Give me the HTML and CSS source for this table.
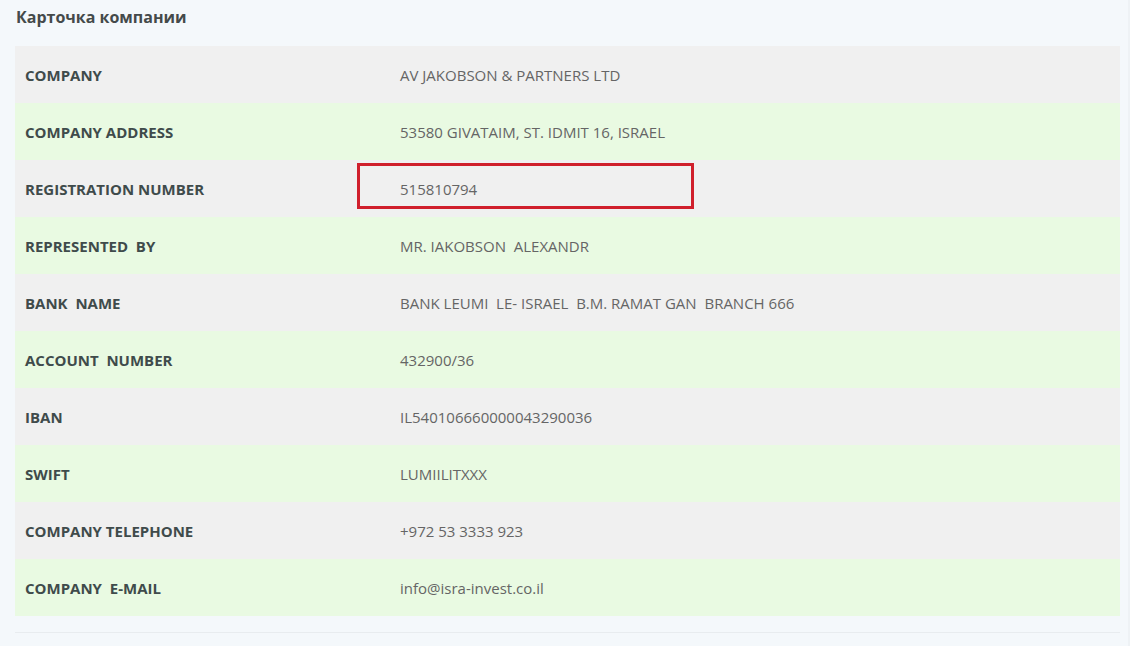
FILE: index.html
```html
<!DOCTYPE html>
<html lang="ru">
<head>
<meta charset="utf-8">
<title>Карточка компании</title>
<link rel="stylesheet" href="styles.css">
</head>
<body>
<div class="page">
  <h2 class="title">Карточка компании</h2>
  <div class="card">
    <div class="row gray"><div class="label">COMPANY</div><div class="value">AV JAKOBSON &amp; PARTNERS LTD</div></div>
    <div class="row green"><div class="label">COMPANY ADDRESS</div><div class="value">53580 GIVATAIM, ST. IDMIT 16, ISRAEL</div></div>
    <div class="row gray"><div class="label">REGISTRATION NUMBER</div><div class="value">515810794</div><div class="mark"></div></div>
    <div class="row green"><div class="label">REPRESENTED&nbsp; BY</div><div class="value">MR. IAKOBSON&nbsp; ALEXANDR</div></div>
    <div class="row gray"><div class="label">BANK&nbsp; NAME</div><div class="value">BANK LEUMI&nbsp; LE- ISRAEL&nbsp; B.M. RAMAT GAN&nbsp; BRANCH 666</div></div>
    <div class="row green"><div class="label">ACCOUNT&nbsp; NUMBER</div><div class="value">432900/36</div></div>
    <div class="row gray"><div class="label">IBAN</div><div class="value">IL540106660000043290036</div></div>
    <div class="row green"><div class="label">SWIFT</div><div class="value">LUMIILITXXX</div></div>
    <div class="row gray"><div class="label">COMPANY TELEPHONE</div><div class="value">+972 53 3333 923</div></div>
    <div class="row green"><div class="label">COMPANY&nbsp; E-MAIL</div><div class="value">info@isra-invest.co.il</div></div>
  </div>
  <div class="rule"></div>
</div>
</body>
</html>
```
FILE: styles.css
```css
html, body {
  margin: 0;
  padding: 0;
  background: #f4f8fb;
  font-family: "Open Sans", "Liberation Sans", sans-serif;
}
.page {
  width: 1130px;
  height: 646px;
  overflow: hidden;
  box-sizing: border-box;
  padding: 0 8px 0 15px;
  border-right: 2px solid #eef2f5;
}
.title {
  margin: 0;
  padding: 6px 0 0 1px;
  height: 46px;
  box-sizing: border-box;
  font-size: 16px;
  font-weight: 700;
  color: #444a4a;
}
.card {
  display: flex;
  flex-direction: column;
}
.row {
  position: relative;
  display: grid;
  grid-template-columns: 385px 1fr;
  height: 57px;
  align-items: center;
}
.gray { background: #f0f0f0; }
.green { background: #e9fae2; }
.label {
  padding-left: 10px;
  font-size: 15px;
  font-weight: 700;
  color: #3f4b4b;
}
.value {
  font-size: 15px;
  color: #656565;
}
.mark {
  position: absolute;
  left: 342px;
  top: 3px;
  width: 331px;
  height: 40px;
  border: 3px solid #d01f2c;
}
.rule {
  margin-top: 16px;
  height: 1px;
  background: #e8ecef;
}
```
